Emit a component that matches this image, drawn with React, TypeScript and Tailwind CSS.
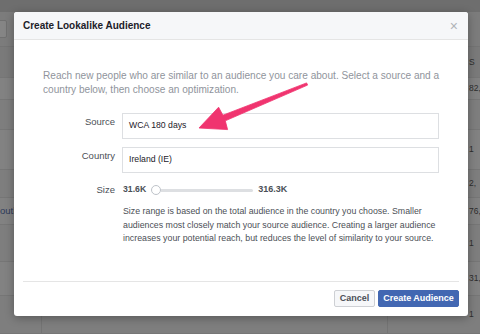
const bgRows = [
  { h: 31, right: "S" },
  { h: 22, right: "82," },
  { h: 30, right: "" },
  { h: 40, right: "1" },
  { h: 28, right: "2," },
  { h: 27, right: "76,", left: "outk" },
  { h: 37, right: "1" },
  { h: 34, right: "31," },
  { h: 38, right: "1" },
];

function Backdrop() {
  return (
    <div className="flex h-full w-full flex-col bg-[#828282]">
      {/* top bar */}
      <div className="h-[12px] shrink-0 bg-[#6e6e6e]" />
      {/* toolbar */}
      <div className="flex h-[35px] shrink-0 items-center border-b border-[#747474] bg-[#7c7c7c]">
        <div className="ml-[-4px] h-[18px] w-[11px] rounded-[2px] border border-[#707070] bg-[#858585]" />
      </div>
      {bgRows.map((r, i) => (
        <div
          key={i}
          style={{ height: r.h }}
          className={`flex shrink-0 items-center border-b border-[#767676] ${i === 0 ? "bg-[#7a7a7a]" : i % 2 ? "bg-[#828282]" : "bg-[#7e7e7e]"}`}
        >
          <div className="flex h-full w-[42px] items-center border-r border-[#747474]">
            {r.left && <span className="text-[9.5px] text-[#2c3a5a]">{r.left}</span>}
          </div>
          <div className="h-full flex-1" />
          <div className="h-full w-[81px] border-l border-[#747474]" />
          <div className="flex h-full w-[12px] items-center whitespace-nowrap pl-[1px] text-[8.5px] text-[#2e2e2e]">
            {r.right}
          </div>
        </div>
      ))}
    </div>
  );
}

function Arrow() {
  return (
    <svg className="pointer-events-none absolute left-0 top-0" width="480" height="334" viewBox="0 0 480 334">
      <polygon
        points="199,128 218.6,107.2 222.9,115.2 306.6,82.9 307.6,85.1 225.3,120.8 227.6,129.6"
        fill="#f0346f"
        stroke="#f0346f"
        strokeWidth="0.8"
        strokeLinejoin="round"
      />
    </svg>
  );
}

export default function App() {
  return (
    <div className="relative h-[334px] w-[480px] overflow-hidden font-['Liberation_Sans',Arial,sans-serif]">
      <Backdrop />

      {/* Modal */}
      <div className="absolute left-[14px] top-[12px] flex h-[304px] w-[454px] flex-col overflow-hidden rounded-[3px] bg-white shadow-[0_2px_10px_rgba(0,0,0,0.3)]">
        <div className="flex h-[28px] shrink-0 items-center justify-between border-b border-[#e5e5e5] bg-[#f6f7f9] pl-[9px] pr-[10px]">
          <span className="text-[10px] font-bold text-[#1d2129]">Create Lookalike Audience</span>
          <span className="text-[14px] leading-none text-[#b0b3b8]">×</span>
        </div>

        <div className="flex-1 pl-[29px] pt-[29px]">
          <p className="w-[404px] text-[10.1px] leading-[14px] text-[#90949c]">
            Reach new people who are similar to an audience you care about. Select a source and a country below, then
            choose an optimization.
          </p>

          <div className="mt-[16px] flex flex-col gap-[8px]">
            <div className="flex items-start gap-[7px]">
              <label className="w-[72px] pt-[3px] text-right text-[9.5px] leading-[12px] text-[#4b4f56]">Source</label>
              <div className="flex h-[26px] w-[317px] items-center border border-[#dddfe2] px-[6px] text-[8.7px] text-[#1d2129]">
                WCA 180 days
              </div>
            </div>
            <div className="flex items-start gap-[7px]">
              <label className="w-[72px] pt-[3px] text-right text-[9.5px] leading-[12px] text-[#4b4f56]">Country</label>
              <div className="flex h-[26px] w-[317px] items-center border border-[#dddfe2] px-[6px] text-[8.7px] text-[#1d2129]">
                Ireland (IE)
              </div>
            </div>
            <div className="flex h-[18px] items-center gap-[7px]">
              <label className="w-[72px] text-right text-[9.5px] text-[#4b4f56]">Size</label>
              <div className="flex items-center pl-[1px]">
                <span className="text-[8.7px] font-bold text-[#4b4f56]">31.6K</span>
                <div className="ml-[5px] h-[10px] w-[10px] rounded-full border border-[#bec3c9] bg-white" />
                <div className="h-[3px] w-[92px] rounded-r-full bg-[#dddfe2]" />
                <span className="ml-[5px] text-[9px] font-bold text-[#4b4f56]">316.3K</span>
              </div>
            </div>
          </div>

          <p className="ml-[80px] mt-[6px] w-[330px] whitespace-nowrap text-[8.8px] leading-[13.5px] text-[#4b4f56]">
            Size range is based on the total audience in the country you choose. Smaller
            <br />
            audiences most closely match your source audience. Creating a larger audience
            <br />
            increases your potential reach, but reduces the level of similarity to your source.
          </p>
        </div>

        <div className="mx-[9px] flex shrink-0 justify-end gap-[3px] border-t border-[#e5e5e5] pb-[9px] pt-[8px]">
          <button className="flex h-[17px] w-[41px] items-center justify-center rounded-[2px] border border-[#ced0d4] bg-[#f6f7f9] text-[9px] font-bold text-[#4b4f56]">
            Cancel
          </button>
          <button className="flex h-[17px] w-[81px] items-center justify-center rounded-[2px] border border-[#4267b2] bg-[#4267b2] text-[9px] font-bold text-white">
            Create Audience
          </button>
        </div>
      </div>

      <Arrow />
    </div>
  );
}
